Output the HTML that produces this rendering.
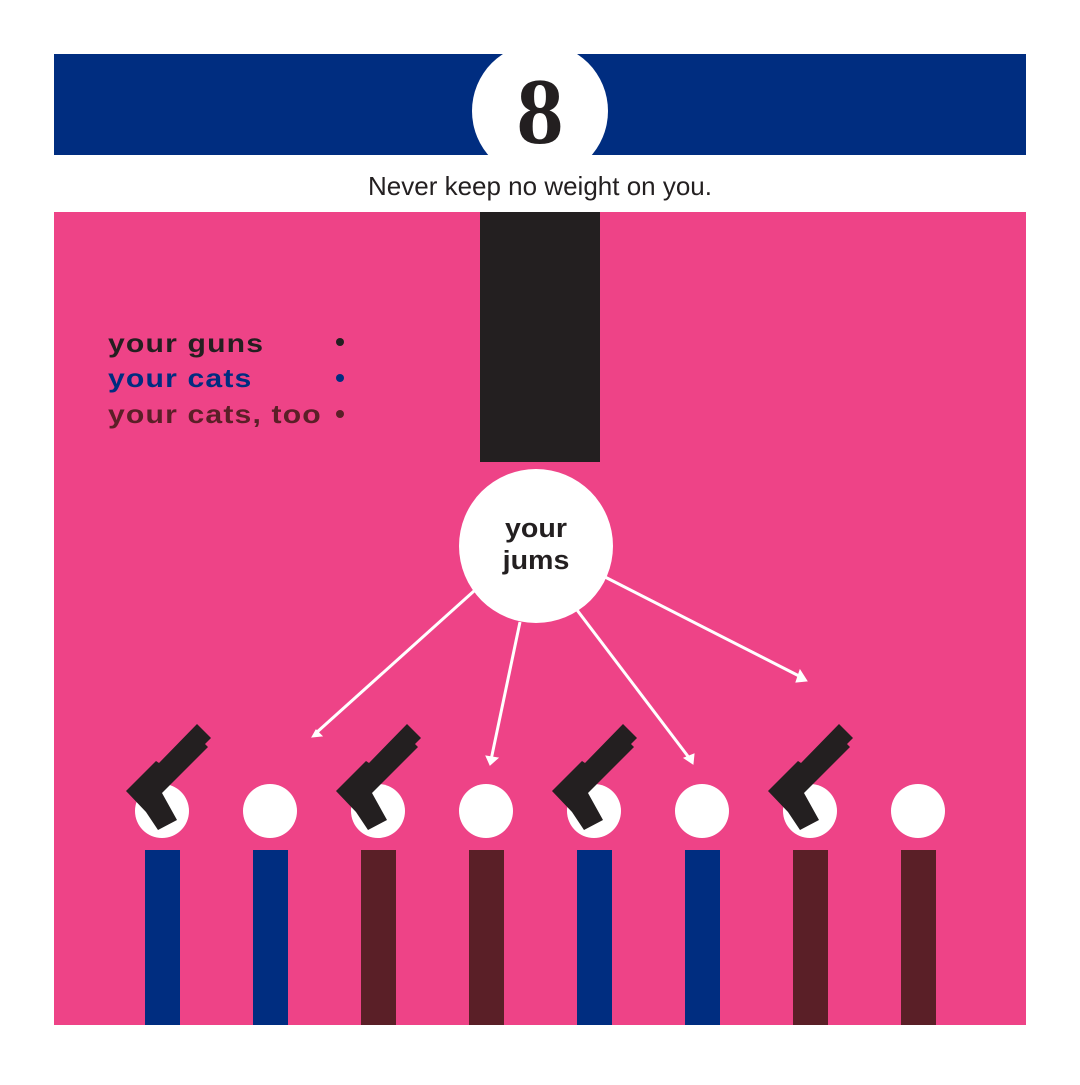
<!DOCTYPE html>
<html><head><style>
body{margin:0;width:1080px;height:1080px;background:#fff;overflow:hidden}
</style></head><body>
<svg width="1080" height="1080" xmlns="http://www.w3.org/2000/svg">
<rect x="54" y="54" width="972" height="101" fill="#002d80"/>
<circle cx="540" cy="111" r="68" fill="#fff"/>
<text x="540" y="143" text-anchor="middle" font-family="Liberation Serif, serif" font-weight="bold" font-size="94" fill="#231f20">8</text>
<text x="540" y="195" text-anchor="middle" font-family="Liberation Sans, sans-serif" font-size="26" fill="#231f20">Never keep no weight on you.</text>
<rect x="54" y="212" width="972" height="813" fill="#ee4387"/>
<rect x="480" y="212" width="120" height="250" fill="#231f20"/>
<g font-family="Liberation Sans, sans-serif" font-weight="900" font-size="26" letter-spacing="1" transform="translate(108 0) scale(1.16 1)">
<text x="0" y="352" fill="#231f20">your guns</text>
<text x="0" y="387" fill="#002d80">your cats</text>
<text x="0" y="423" fill="#5a1f27">your cats, too</text>
</g>
<circle cx="340" cy="342" r="4" fill="#231f20"/>
<circle cx="340" cy="378" r="4" fill="#002d80"/>
<circle cx="340" cy="414" r="4" fill="#5a1f27"/>
<g stroke="#fff" stroke-width="3" fill="#fff">
<line x1="474" y1="591" x2="316" y2="733"/>
<line x1="520" y1="622" x2="491" y2="760"/>
<line x1="577" y1="610" x2="690" y2="759"/>
<line x1="605" y1="577" x2="803" y2="678"/>
<polygon points="312,737 322,736 316,730" stroke-width="1"/>
<polygon points="490,765 486,756 498,758" stroke-width="1"/>
<polygon points="693,764 694,754 684,758" stroke-width="1"/>
<polygon points="807,681 800,670 796,682" stroke-width="1"/>
</g>
<circle cx="536" cy="546" r="77" fill="#fff"/>
<g font-family="Liberation Sans, sans-serif" font-weight="bold" font-size="26" fill="#231f20" transform="translate(536 0) scale(1.1 1)">
<text x="0" y="537" text-anchor="middle">your</text>
<text x="0" y="569" text-anchor="middle">jums</text>
</g>
<g fill="#fff">
<circle cx="162" cy="811" r="27"/><circle cx="270" cy="811" r="27"/><circle cx="378" cy="811" r="27"/><circle cx="486" cy="811" r="27"/>
<circle cx="594" cy="811" r="27"/><circle cx="702" cy="811" r="27"/><circle cx="810" cy="811" r="27"/><circle cx="918" cy="811" r="27"/>
</g>
<rect x="145" y="850" width="35" height="175" fill="#002d80"/>
<rect x="253" y="850" width="35" height="175" fill="#002d80"/>
<rect x="361" y="850" width="35" height="175" fill="#5a1f27"/>
<rect x="469" y="850" width="35" height="175" fill="#5a1f27"/>
<rect x="577" y="850" width="35" height="175" fill="#002d80"/>
<rect x="685" y="850" width="35" height="175" fill="#002d80"/>
<rect x="793" y="850" width="35" height="175" fill="#5a1f27"/>
<rect x="901" y="850" width="35" height="175" fill="#5a1f27"/>
<defs><polygon id="g" points="197,724 211,738 205,744 208,747 162,793 177,820 158,830 146,812 126,791 156,761 159,763" fill="#231f20"/></defs>
<use href="#g"/>
<use href="#g" x="210"/>
<use href="#g" x="426"/>
<use href="#g" x="642"/>
</svg>
</body></html>
